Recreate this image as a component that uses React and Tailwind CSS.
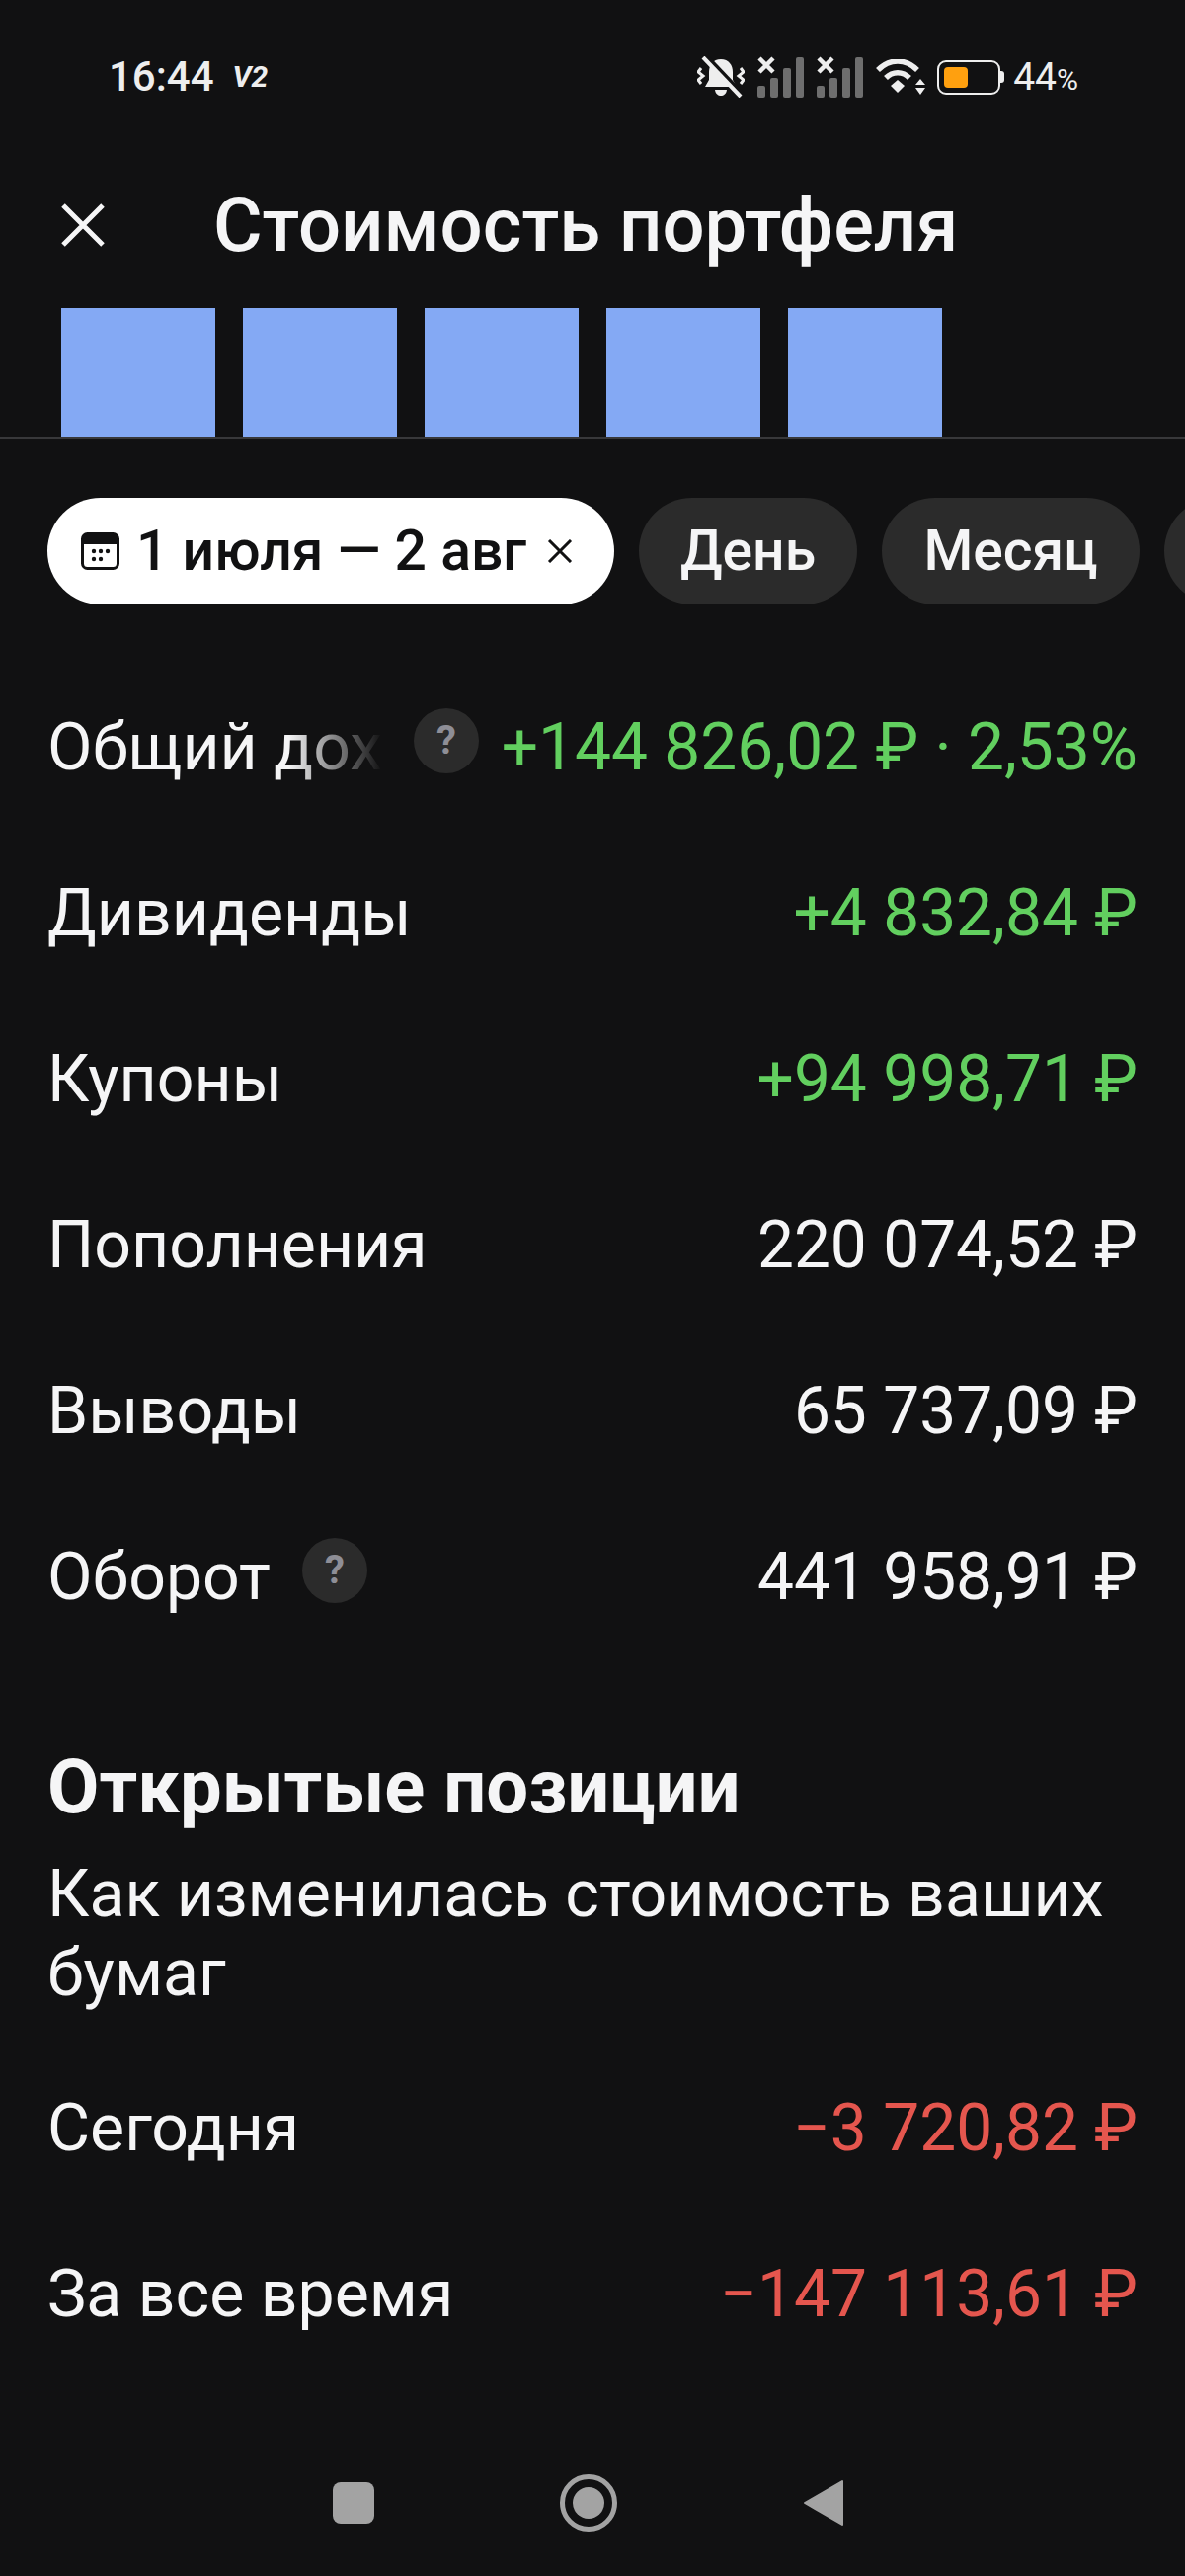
import React from "react";

const Help = ({ className }) => (
  <div className={`w-[66px] h-[66px] rounded-full bg-[#2b2b2b] flex items-center justify-center text-[#8e8e96] text-[40px] font-bold ${className}`}>
    ?
  </div>
);

const Row = ({ label, value, color = "text-[#f5f5f6]", help }) => (
  <div className="h-[168px] flex items-center justify-between">
    <div className="flex items-center">
      <span>{label}</span>
      {help && <Help className="ml-[32px] -mt-[14px]" />}
    </div>
    <span className={`text-[65.8px] ${color}`}>{value}</span>
  </div>
);

const Signal = () => (
  <svg width="47" height="42" viewBox="0 0 47 42">
    <path d="M2 2l14 14M16 2L2 16" stroke="#eeeeee" strokeWidth="4.5" fill="none" />
    <rect x="0" y="30" width="8" height="12" rx="2" fill="#6e6e6e" />
    <rect x="13" y="22" width="8" height="20" rx="2" fill="#6e6e6e" />
    <rect x="26" y="12" width="8" height="30" rx="2" fill="#6e6e6e" />
    <rect x="39" y="1" width="8" height="41" rx="2" fill="#6e6e6e" />
  </svg>
);

const StatusBar = () => (
  <div className="h-[156px] pl-[110px] pr-[108px] flex items-center justify-between text-[#eeeeee]">
    <div className="flex items-center gap-[19px]">
      <span className="text-[42px] leading-none font-medium">16:44</span>
      <span className="text-[30px] leading-none font-bold italic">V2</span>
    </div>
    <div className="flex items-center">
      <svg width="48" height="42" viewBox="0 0 48 42" fill="none">
        <path d="M24 3c8 0 12 6 12 13v8l4 7H8l4-7v-8c0-7 4-13 12-13z" fill="#eeeeee" />
        <path d="M18 34h12c-1 8-11 8-12 0z" fill="#eeeeee" />
        <path d="M9 0l38 40" stroke="#111112" strokeWidth="5" />
        <path d="M6 1l38 40" stroke="#eeeeee" strokeWidth="4" />
        <path d="M4 12l-3 4 5 4-5 4 3 4M44 12l3 4-5 4 5 4-3 4" stroke="#eeeeee" strokeWidth="3" />
      </svg>
      <div className="ml-[13px]"><Signal /></div>
      <div className="ml-[13px]"><Signal /></div>
      <svg className="ml-[13px]" width="50" height="36" viewBox="0 0 50 36" fill="none">
        <path d="M2 11C14-1 30-1 42 11" stroke="#eeeeee" strokeWidth="5.5" />
        <path d="M10 19c7-7 17-7 24 0" stroke="#eeeeee" strokeWidth="5.5" />
        <path d="M15 27l7-6 7 6-7 7z" fill="#eeeeee" />
        <path d="M45 20l5 6H40zM45 36l5-7H40z" fill="#eeeeee" />
      </svg>
      <div className="ml-[12px] flex items-center">
        <div className="w-[64px] h-[35px] rounded-[9px] border-[2.5px] border-[#eeeeee] p-[5px]">
          <div className="w-[24px] h-full rounded-[4px] bg-[#ffa00f]" />
        </div>
        <div className="w-[4px] h-[12px] rounded-r-[3px] bg-[#eeeeee]" />
      </div>
      <span className="ml-[9px] text-[39px] leading-none">
        44<span className="text-[30px]">%</span>
      </span>
    </div>
  </div>
);

const App = () => {
  return (
    <div className="w-[1200px] h-[2608px] bg-[#111112] text-[#f5f5f6] overflow-hidden font-['Roboto',sans-serif]">
      <StatusBar />

      {/* Header */}
      <div className="h-[144px] pl-[62px] flex items-center gap-[110px]">
        <svg width="44" height="44" viewBox="0 0 44 44" stroke="#f5f5f6" strokeWidth="5" fill="none">
          <path d="M2 2l40 40M42 2L2 42" />
        </svg>
        <h1 className="text-[76px] leading-none font-medium whitespace-nowrap">Стоимость портфеля</h1>
      </div>

      {/* Tabs */}
      <div className="mt-[12px] border-b-2 border-[#38383a] pl-[62px] flex gap-[28px]">
        <div className="w-[156px] h-[130px] bg-[#84a9f4]" />
        <div className="w-[156px] h-[130px] bg-[#84a9f4]" />
        <div className="w-[156px] h-[130px] bg-[#84a9f4]" />
        <div className="w-[156px] h-[130px] bg-[#84a9f4]" />
        <div className="w-[156px] h-[130px] bg-[#84a9f4]" />
      </div>

      {/* Filters */}
      <div className="mt-[60px] pl-[48px] flex gap-[25px] text-[57px] font-medium whitespace-nowrap">
        <div className="w-[574px] h-[108px] shrink-0 rounded-full bg-white text-[#111112] pl-[34px] flex items-center">
          <svg width="39" height="38" viewBox="0 0 39 38" fill="none">
            <rect x="1.5" y="1.5" width="36" height="35" rx="5" stroke="#111112" strokeWidth="3" />
            <path d="M2 6a4 4 0 0 1 4-4h27a4 4 0 0 1 4 4v6H2z" fill="#111112" />
            <g fill="#111112">
              <circle cx="13" cy="19" r="2.2" /><circle cx="20" cy="19" r="2.2" /><circle cx="27" cy="19" r="2.2" />
              <circle cx="13" cy="27" r="2.2" /><circle cx="20" cy="27" r="2.2" />
            </g>
          </svg>
          <span className="ml-[17px]">1 июля — 2 авг</span>
          <svg className="ml-[21px]" width="26" height="24" viewBox="0 0 26 24" stroke="#111112" strokeWidth="3" fill="none">
            <path d="M2 1l22 22M24 1L2 23" />
          </svg>
        </div>
        <div className="w-[221px] h-[108px] shrink-0 rounded-full bg-[#2b2b2b] flex items-center justify-center">День</div>
        <div className="w-[261px] h-[108px] shrink-0 rounded-full bg-[#2b2b2b] flex items-center justify-center">Месяц</div>
        <div className="w-[200px] h-[108px] shrink-0 rounded-full bg-[#2b2b2b]" />
      </div>

      {/* Stats */}
      <div className="mt-[61px] px-[48px] text-[66.2px]">
        <Row
          label={
            <span className="block w-[339px] overflow-hidden whitespace-nowrap bg-linear-to-r from-[#f5f5f6] from-[72%] to-transparent bg-clip-text text-transparent">
              Общий доход
            </span>
          }
          value="+144 826,02 ₽ · 2,53%"
          color="text-[#62cf5f]"
          help
        />
        <Row label="Дивиденды" value="+4 832,84 ₽" color="text-[#62cf5f]" />
        <Row label="Купоны" value="+94 998,71 ₽" color="text-[#62cf5f]" />
        <Row label="Пополнения" value="220 074,52 ₽" />
        <Row label="Выводы" value="65 737,09 ₽" />
        <Row label="Оборот" value="441 958,91 ₽" help />

        {/* Open positions */}
        <h2 className="mt-[94px] mb-[35px] text-[76px] leading-[68px] font-bold">Открытые позиции</h2>
        <p className="leading-[80px]">Как изменилась стоимость ваших бумаг</p>
        <div className="mt-[33px]">
          <Row label="Сегодня" value="−3 720,82 ₽" color="text-[#e5564e]" />
          <Row label="За все время" value="−147 113,61 ₽" color="text-[#e5564e]" />
        </div>
      </div>

      {/* Nav bar */}
      <div className="mt-[87px] h-[80px] pl-[337px] flex items-center">
        <div className="w-[42px] h-[42px] rounded-[8px] bg-[#a3a3a3]" />
        <div className="ml-[188px] w-[58px] h-[58px] rounded-full border-[5px] border-[#a3a3a3] flex items-center justify-center">
          <div className="w-[32px] h-[32px] rounded-full bg-[#a3a3a3]" />
        </div>
        <svg className="ml-[189px]" width="40" height="48" viewBox="0 0 40 48">
          <path d="M39 2v44L1 24z" fill="#a3a3a3" stroke="#a3a3a3" strokeWidth="2" strokeLinejoin="round" />
        </svg>
      </div>
    </div>
  );
};

export default App;
